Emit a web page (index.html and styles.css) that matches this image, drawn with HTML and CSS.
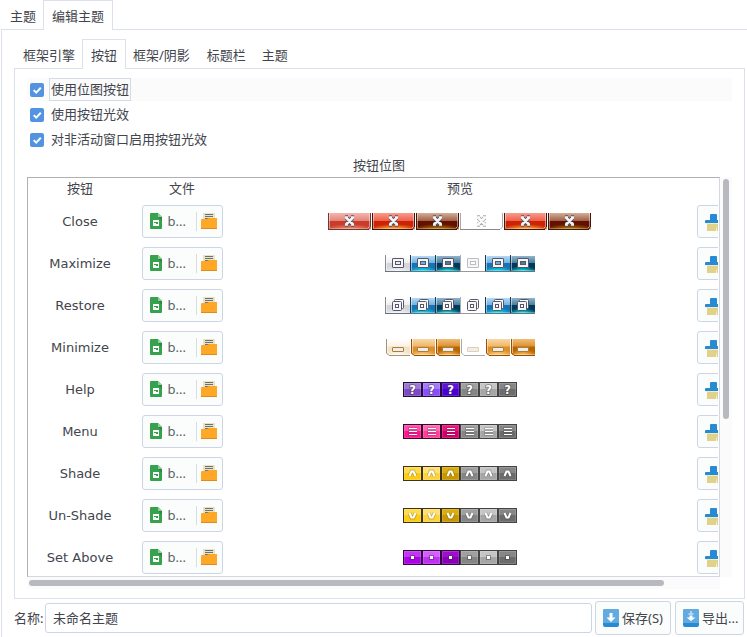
FILE: index.html
```html
<!DOCTYPE html>
<html lang="zh-CN">
<head>
<meta charset="utf-8">
<title>编辑主题</title>
<link rel="stylesheet" href="styles.css">
</head>
<body>
<svg class="defs" aria-hidden="true">
  <symbol id="check" viewBox="0 0 14 14"><path d="M3.7 7.1 6.2 9.6 10.8 4.8" fill="none" stroke="#fff" stroke-width="2"/></symbol>
  <symbol id="sheet" viewBox="0 0 12 16"><path d="M1 0h7l4 4v11q0 1-1 1H1q-1 0-1-1V1q0-1 1-1z" fill="#37a24d"/><path d="M8 0l4 4H8z" fill="#8fcd9b"/><path d="M8 4h4v4z" fill="#2b8a40"/><path d="M3 7h6v6H3z" fill="#fff"/><path d="M4 9h4v2H6v-1H4z" fill="#37a24d"/></symbol>
  <symbol id="folder" viewBox="0 0 16 16"><path d="M2 0h12v9H2z" fill="#e6e3cb"/><path d="M4 1h8v1H4zM4 3h8v1H4zM4 5h8v1H4z" fill="#70716a"/><path d="M0 7q0-1 1-1h5l2-1h8v11H0z" fill="#ffa726"/><path d="M0 15h16v1H0z" fill="#dd8e18"/></symbol>
  <symbol id="brush" viewBox="0 0 16 17"><path d="M5 1q0-1 1-1h5q1 0 1 1v5h3q1 0 1 1v2H0V7q0-1 1-1h4z" fill="#268bd2"/><path d="M1 9h14v1H1z" fill="#f0ebc8"/><path d="M2 10h12v7h-2l-1-5v5H2z" fill="#e0d18b"/></symbol>
  <symbol id="save" viewBox="0 0 16 18"><rect width="16" height="18" rx="2" fill="#268bd2"/><path d="M0 14V2q0-2 2-2h12q2 0 2 2v12z" fill="#62abe0"/><path d="M6.500 4h3v4.500h3L8 13 3.500 8.500h3z" fill="#fff"/></symbol>
  <symbol id="export" viewBox="0 0 16 18"><rect width="16" height="18" rx="2" fill="#268bd2"/><path d="M0 14V2q0-2 2-2h12q2 0 2 2v12z" fill="#62abe0"/><path d="M7 2.500h2v1H7zM5.500 4.500h5v1h-5zM6.500 6.500h3v2h3L8 12 3.500 8.500h3z" fill="#fff"/></symbol>
</svg>
<div class="window">
  <nav class="tabs tabs-outer"><span class="tab">主题</span><span class="tab active">编辑主题</span></nav>
  <main class="editor">
    <nav class="tabs tabs-inner"><span class="tab">框架引擎</span><span class="tab active">按钮</span><span class="tab">框架/阴影</span><span class="tab">标题栏</span><span class="tab">主题</span></nav>
    <section class="panel">
      <label class="option focused"><span class="box"><svg><use href="#check"/></svg></span><span class="caption">使用位图按钮</span></label>
      <label class="option"><span class="box"><svg><use href="#check"/></svg></span><span class="caption">使用按钮光效</span></label>
      <label class="option"><span class="box"><svg><use href="#check"/></svg></span><span class="caption">对非活动窗口启用按钮光效</span></label>
      <h2 class="title">按钮位图</h2>
      <div class="scroller">
        <div class="viewport">
          <div class="row head"><span>按钮</span><span>文件</span><span>预览</span></div>
          <div id="rows"></div>
        </div>
        <div class="vbar"><div class="vthumb"></div></div>
        <div class="hbar"><div class="hthumb"></div></div>
      </div>
    </section>
    <footer class="footer">
      <span class="name-label">名称:</span>
      <div class="name-input">未命名主题</div>
      <button class="btn save"><svg><use href="#save"/></svg><span>保存(S)</span></button>
      <button class="btn export"><svg><use href="#export"/></svg><span>导出...</span></button>
    </footer>
  </main>
</div>
<script src="app.js"></script>
</body>
</html>
```
FILE: styles.css
```css
* { box-sizing: border-box; }
html, body { margin: 0; height: 100%; overflow: hidden; background: #fff; }
body { font: 13px/20px "Noto Sans", "Noto Sans CJK SC", sans-serif; color: #43454d; }
.defs { display: none; }
svg { display: block; flex: none; }
.window { width: 747px; height: 637px; padding-left: 1px; display: flex; flex-direction: column; }

.tabs { display: flex; align-items: flex-end; flex: none; white-space: nowrap; }
.tab { padding: 0 9px; height: 23px; line-height: 21px; }
.tab.active { border: 1px solid #dbe0ea; border-bottom: 0; background: #fff; margin-bottom: -1px; padding: 0 8px; position: relative; }
.tabs-outer { height: 29px; }
.tabs-outer .tab.active { height: 30px; line-height: 30px; width: 70px; }
.tabs-outer .tab:first-child { width: 42px; padding: 0 0 0 9px; }
.editor { flex: 1; border-top: 1px solid #dbe0ea; border-left: 1px solid #dbe0ea; padding: 9px 2px 0 12px; display: flex; flex-direction: column; }
.tabs-inner { height: 29px; }
.tabs-inner .tab { padding: 0 9px 0 7px; }
.tabs-inner .tab:first-child { width: 68px; padding: 0 0 0 9px; }
.tabs-inner .tab.active { height: 30px; line-height: 30px; width: 44px; padding: 0 0 0 8px; }
.tabs-inner .tab:nth-child(n+4) { padding: 0 8px; }

.panel { height: 531px; flex: none; border: 1px solid #dbe0ea; padding: 9px 12px 0; }
.option { display: flex; align-items: center; height: 23px; margin-bottom: 2px; padding-left: 3px; gap: 5px; }
.option.focused { background: #fbfbfc; }
.box { width: 14px; height: 14px; border-radius: 2px; background: #5294e2; flex: none; }
.box svg { width: 14px; height: 14px; }
.caption { border: 1px solid transparent; height: 23px; line-height: 21px; padding: 0 1px; }
.focused .caption { border-color: #d3dae8; }
.title { margin: 1px 0 0; padding-right: 1px; font-size: 13px; font-weight: 400; height: 24px; line-height: 25px; text-align: center; }

.scroller { display: grid; grid-template: 400px 12px / 693px 12px; }
.viewport { overflow: hidden; border: 1px solid #d3d7e2; border-top-color: #b0b0b3; border-left-color: #b0b0b3; }
#rows { overflow: hidden; width: 690px; }
.row { display: grid; grid-template-columns: 104px 100px 456px 60px; align-items: center; justify-items: center; height: 42px; }
.row.head { height: 23px; line-height: 20px; align-items: start; }
.row .label { font-family: "DejaVu Sans", sans-serif; margin-bottom: 1px; }
.file { display: flex; align-items: center; width: 81px; height: 33px; margin-bottom: 1px; border: 1px solid #ccd5e6; border-radius: 3px; background: #fbfdfc; padding-left: 7px; color: #5c5f66; }
.file .sheet { width: 12px; height: 16px; margin-bottom: 1px; }
.file .fname { width: 34px; padding-left: 6px; line-height: 31px; height: 31px; }
.file .sep { width: 1px; height: 19px; background: #d9dce0; margin-right: 4px; }
.file .folder { width: 16px; height: 16px; margin-bottom: 1px; }
.clear { justify-self: start; margin: 0 0 1px 9px; width: 34px; height: 33px; border: 1px solid #ccd5e6; border-radius: 3px; background: #fbfdfc; padding: 8px 7px 6px; }
.clear svg { width: 16px; height: 17px; }
.strip { display: block; margin-bottom: 1px; }
.strip text { font: bold 11.5px "DejaVu Sans", sans-serif; fill: #fff; stroke: #333; stroke-opacity: .55; stroke-width: 1.5px; paint-order: stroke; }

.vbar { background: #fbfbfc; padding: 2px 0 0 3px; }
.vthumb { width: 6px; height: 240px; border-radius: 3px; background: #b8b8bf; }
.hbar { background: #fbfbfc; padding: 3px 0 0 2px; }
.hthumb { width: 635px; height: 6px; border-radius: 3px; background: #b8b8bf; }

.footer { display: flex; align-items: center; height: 38px; white-space: nowrap; }
.name-label { width: 31px; }
.name-input { width: 547px; height: 30px; line-height: 29px; border: 1px solid #ccd5e6; border-radius: 3px; padding-left: 7px; margin-right: 3px; }
.btn { display: flex; align-items: center; gap: 3px; height: 34px; border: 1px solid #ccd5e6; border-radius: 3px; background: #fbfdfc; padding: 0 0 0 7px; font: inherit; color: inherit; overflow: hidden; }
.btn svg { width: 16px; height: 18px; margin-bottom: 1px; }
.save { width: 76px; margin-right: 4px; }
.export { width: 69px; }
```
FILE: app.js
```js
let gradientId = 0;

function rect(x, y, w, h, fill, extra = '') {
  return `<rect x="${x}" y="${y}" width="${w}" height="${h}" fill="${fill}" ${extra}/>`;
}

// Vertical gloss: light upper half, saturated lower half, glow rising from the bottom centre.
function gloss(x, y, w, h, [a, b, c, d]) {
  const id = 'g' + gradientId++;
  return `<linearGradient id="${id}" x2="0" y2="1"><stop offset="0" stop-color="${a}"/><stop offset=".46" stop-color="${b}"/><stop offset=".48" stop-color="${c}"/><stop offset="1" stop-color="${c}"/></linearGradient>` +
    `<radialGradient id="${id}r" cx=".5" cy="1" r=".6" fy="1"><stop offset="0" stop-color="${d}"/><stop offset=".3" stop-color="${d}" stop-opacity=".75"/><stop offset="1" stop-color="${d}" stop-opacity="0"/></radialGradient>` +
    rect(x, y, w, h, `url(#${id})`) + rect(x, y + 7, w, h - 7, `url(#${id}r)`);
}

const closeFills = [
  ['#f5b5ad', '#e28579', '#c93c29', '#ee9b80'],
  ['#fa9c8a', '#ee604c', '#cc2205', '#ffc840'],
  ['#d5ad98', '#9e6144', '#641000', '#c09400'],
  null
];
const blueFills = [
  ['#ffffff', '#ededf0', '#d5d5dc', '#f4f4f5'],
  ['#b4d8f4', '#6fb2e2', '#1873b5', '#00eaf2'],
  ['#91b3cc', '#45809c', '#04385a', '#00ecec'],
  null
];
const orangeFills = [
  ['#ffffff', '#fbf1e2', '#f3e2c8', '#fffaf0'],
  ['#f8d8a9', '#f0b665', '#dd8f2b', '#ffd28a'],
  ['#f1bd76', '#dc9133', '#ba6500', '#ffc468'],
  null
];
const order = [0, 1, 2, 3, 1, 2];

function closeCell(i) {
  const f = closeFills[order[i]], x = i * 44;
  let s = '';
  if (f) {
    const edge = order[i] === 0 ? '#70372d' : '#451309';
    s += gloss(x, 0, 43, 17, f) + rect(x, 0, 1, 17, edge) + rect(x + 1, 0, 1, 15, '#fff', 'opacity=".45"') +
      rect(x + 1, 15, 39, 1, '#fff', 'opacity=".3"') + rect(x, 16, 41, 1, edge) +
      rect(x + 41, 0, 1, 14, '#fff', 'opacity=".45"') + rect(x + 42, 0, 1, 14, edge) +
      rect(x + 41, 16, 2, 1, '#d8cac5') + rect(x + 42, 14, 1, 2, '#a68e87') + rect(x + 40, 14, 1, 1, '#fff', 'opacity=".6"');
  } else {
    s += `<path d="M${x + .5} 0V16.500H${x + 40}L${x + 42.5} 14V0" fill="none" stroke="#aaa"/>` + rect(x, 16, 40, 1, '#898989');
  }
  const d = `M${x + 18.5} 5L${x + 24.5} 11M${x + 24.5} 5L${x + 18.5} 11M${x + 17} 4.500h3M${x + 23} 4.500h3M${x + 17} 11.500h3M${x + 23} 11.500h3`;
  return s + `<path d="${d}" fill="none" stroke="${f ? '#505568' : '#aaa9b2'}" stroke-width="4.400" stroke-linejoin="round"/><path d="${d}" fill="none" stroke="${f ? '#f5f5f6' : '#fafafa'}" stroke-width="2.500"/>`;
}

function blueCell(i, glyph) {
  const f = blueFills[order[i]], x = i * 25;
  const edge = !f ? '#aaa' : order[i] === 0 ? '#88888e' : '#153951';
  let s = '';
  if (f) {
    s += gloss(x, 1, 25, 15, f);
    s += rect(x + 1, 1, 1, 14, '#fff', 'opacity=".5"') + rect(x + 1, 15, 24, 1, '#fff', 'opacity=".3"');
  }
  s += rect(x, 0, 1, 17, edge) + rect(x, 16, 25, 1, f ? '#65757f' : '#999');
  const ink = f || glyph === 'restore' ? '#55566b' : '#bdbbc3';
  if (glyph === 'max') {
    s += `<rect x="${x + 7.5}" y="3.500" width="11" height="9" rx=".5" fill="#f6f6f7" stroke="${ink}"/>` +
      `<rect x="${x + 10.5}" y="6.500" width="5" height="3" fill="${f ? f[1] : '#fff'}" stroke="${ink}"/>`;
  } else {
    s += `<rect x="${x + 9.5}" y="2.500" width="9" height="9" rx="1" fill="#fff" stroke="${ink}"/>` +
      `<rect x="${x + 7.5}" y="4.500" width="9" height="9" rx="1" fill="#f5f5f6" stroke="${ink}"/>` +
      `<rect x="${x + 10.5}" y="7.500" width="3" height="3" fill="#fff" stroke="${ink}"/>`;
  }
  return s;
}

function minimizeCell(i) {
  const f = orangeFills[order[i]], x = i * 25 + 1;
  const edge = !f ? '#a9a9a9' : order[i] === 0 ? '#a19279' : '#995100';
  let s = '';
  if (f) {
    s += gloss(x, 0, 24, 16, f);
    s += rect(x + 1, 0, 1, 14, '#fff', 'opacity=".5"') + rect(x + 3, 15, 21, 1, '#fff', 'opacity=".35"');
  }
  s += `<path d="M${x} 14v3h3z" fill="#fff"/><path d="M${x + .5} 0V14L${x + 3} 16.500H${x + 24}" fill="none" stroke="${edge}"/>`;
  return s + `<rect x="${x + 6.5}" y="8.500" width="11" height="4" rx=".5" fill="#eceeef" stroke="${f ? '#b07c30' : '#e4cead'}"/>`;
}

function smallCell(i, kind, colors) {
  const x = i * 19;
  const c = i < 3 ? colors[i] : [['#a0a0a0', '#858585'], ['#c5c5c5', '#a6a6a6'], ['#868686', '#6c6c6c']][i - 3];
  const edge = i < 3 ? colors[3] : '#444';
  let s = rect(x, 0, 19, 15, edge) + rect(x + 1, 1, 17, 13, c[0]) + rect(x + 1, 7, 17, 7, c[1]) +
    `<rect x="${x + 1.5}" y="1.500" width="16" height="12" fill="none" stroke="#fff" opacity=".15"/>`;
  const shade = '#333', cx = x + 9.5;
  if (kind === 'help') s += `<text x="${cx}" y="12" text-anchor="middle">?</text>`;
  if (kind === 'menu') {
    s += rect(x + 5, 3, 9, 9, shade, 'opacity=".2" rx="1"');
    for (const y of [4, 7, 10]) s += rect(x + 6, y, 8, 1, '#fff');
  }
  if (kind === 'up' || kind === 'down') {
    const d = kind === 'up' ? `M${cx - 3} 10L${cx - 1} 5.500H${cx + 1}L${cx + 3} 10` : `M${cx - 3} 5L${cx - 1} 9.500H${cx + 1}L${cx + 3} 5`;
    s += `<path d="${d}" fill="none" stroke="${shade}" stroke-opacity=".25" stroke-width="3.800"/><path d="${d}" fill="none" stroke="#fff" stroke-width="2"/>`;
  }
  if (kind === 'dot') s += rect(x + 7, 5, 5, 5, shade, 'opacity=".4"') + rect(x + 8, 6, 3, 3, '#fff');
  return s;
}

function strip(width, height, cell) {
  return `<svg class="strip" width="${width}" height="${height}" viewBox="0 0 ${width} ${height}">${order.map((_, i) => cell(i)).join('')}</svg>`;
}
const small = (kind, colors) => strip(114, 15, i => smallCell(i, kind, colors));
const purple = [['#9e78d4', '#7d49c4'], ['#a47afc', '#8a4df8'], ['#5f12dc', '#4a00d0'], '#20103b'];
const pink = [['#ff4bae', '#fb1590'], ['#ff67b7', '#ff3d9c'], ['#ea1783', '#d3006c'], '#3c0922'];
const yellow = [['#ffdc4c', '#fccb14'], ['#ffe070', '#fdd33d'], ['#dcad0e', '#c99700'], '#3b341f'];
const violet = [['#c136f4', '#ac00e9'], ['#d35fff', '#bf30f4'], ['#a00cd0', '#8700b5'], '#2f0b3b'];

const rows = [
  ['Close', strip(264, 17, closeCell)],
  ['Maximize', strip(150, 17, i => blueCell(i, 'max'))],
  ['Restore', strip(150, 17, i => blueCell(i, 'restore'))],
  ['Minimize', strip(150, 17, minimizeCell)],
  ['Help', small('help', purple)],
  ['Menu', small('menu', pink)],
  ['Shade', small('up', yellow)],
  ['Un-Shade', small('down', yellow)],
  ['Set Above', small('dot', violet)]
];

document.getElementById('rows').innerHTML = rows.map(([name, preview]) => `
  <div class="row">
    <span class="label">${name}</span>
    <div class="file"><svg class="sheet"><use href="#sheet"/></svg><span class="fname">b...</span><span class="sep"></span><svg class="folder"><use href="#folder"/></svg></div>
    ${preview}
    <div class="clear"><svg><use href="#brush"/></svg></div>
  </div>`).join('');
```
